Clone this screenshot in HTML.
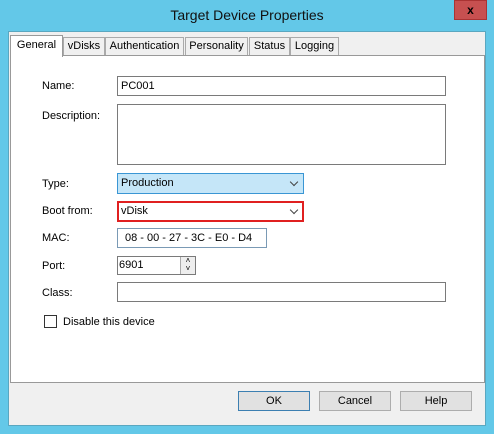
<!DOCTYPE html>
<html><head><style>
*{box-sizing:border-box;margin:0;padding:0}
body{width:494px;height:434px;background:#63c8e8;position:relative;overflow:hidden;font-family:"Liberation Sans",sans-serif;font-size:11px;color:#000}
.a{position:absolute}
.title{left:0;top:7px;width:494px;text-align:center;font-size:14px;color:#111}
.close{left:454px;top:0;width:33px;height:20px;background:#c75050;border:1px solid #a33;color:#000;font-weight:bold;text-align:center;line-height:18px;font-size:12px}
.client{left:8px;top:31px;width:478px;height:395px;background:#f0f0f0;border:1px solid #5aa7c0}
.panel{left:10px;top:55px;width:475px;height:328px;background:#fff;border:1px solid #999}
.tab{top:37px;height:18px;background:#f0f0f0;border:1px solid #aaa;border-bottom:none;text-align:center;line-height:17px}
.lbl{left:42px}
.box{background:#fff;border:1px solid #7a7a7a;padding-left:3px;line-height:18px}
.btn{top:391px;width:72px;height:20px;background:#e1e1e1;border:1px solid #adadad;text-align:center;line-height:18px}
.arr{position:absolute;right:6px;top:5px;width:6px;height:6px;border-right:1.5px solid #444;border-bottom:1.5px solid #444;transform:rotate(45deg)}
</style></head><body>
<div class="a title">Target Device Properties</div>
<div class="a close">x</div>
<div class="a client"></div>
<div class="a panel"></div>
<div class="a tab" style="left:63px;width:42px">vDisks</div>
<div class="a tab" style="left:105px;width:79px">Authentication</div>
<div class="a tab" style="left:185px;width:63px">Personality</div>
<div class="a tab" style="left:249px;width:41px">Status</div>
<div class="a tab" style="left:290px;width:49px">Logging</div>
<div class="a tab" style="left:10px;top:35px;width:53px;height:22px;background:#fff;border-color:#999;line-height:18px">General</div>

<div class="a lbl" style="top:80px">Name:</div>
<div class="a box" style="left:117px;top:76px;width:329px;height:20px">PC001</div>
<div class="a lbl" style="top:110px">Description:</div>
<div class="a box" style="left:117px;top:104px;width:329px;height:61px"></div>
<div class="a lbl" style="top:178px">Type:</div>
<div class="a box" style="left:117px;top:173px;width:187px;height:21px;background:#c5e6f8;border-color:#3a96d4;line-height:19px">Production<span class="arr"></span></div>
<div class="a lbl" style="top:205px">Boot from:</div>
<div class="a box" style="left:117px;top:201px;width:187px;height:21px;border:2px solid #e02020;padding-left:2px;line-height:17px">vDisk<span class="arr" style="right:5px;top:4px"></span></div>
<div class="a lbl" style="top:232px">MAC:</div>
<div class="a box" style="left:117px;top:228px;width:150px;height:20px;border-color:#7a9ab5;padding-left:7px">08 - 00 - 27 - 3C - E0 - D4</div>
<div class="a lbl" style="top:260px">Port:</div>
<div class="a box" style="left:117px;top:256px;width:79px;height:19px;padding-left:1px;line-height:16px">6901</div>
<div class="a" style="left:180px;top:257px;width:15px;height:17px;background:#eee;border-left:1px solid #aaa;font-size:8px;line-height:8px;text-align:center">˄<br>˅</div>
<div class="a lbl" style="top:287px">Class:</div>
<div class="a box" style="left:117px;top:282px;width:329px;height:20px"></div>
<div class="a" style="left:44px;top:315px;width:13px;height:13px;border:1px solid #333;background:#fff"></div>
<div class="a" style="left:63px;top:316px">Disable this device</div>

<div class="a btn" style="left:238px;border-color:#3c7fb1">OK</div>
<div class="a btn" style="left:319px">Cancel</div>
<div class="a btn" style="left:400px">Help</div>
</body></html>
